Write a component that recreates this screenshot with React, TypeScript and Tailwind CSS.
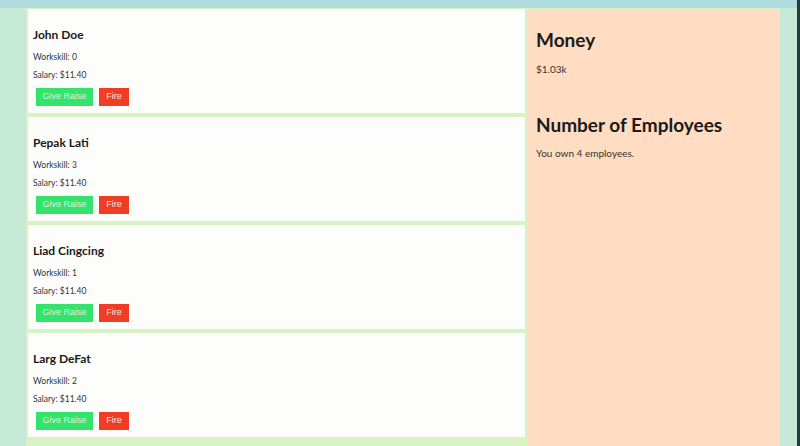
const employees = [
  { name: "John Doe", skill: 0 },
  { name: "Pepak Lati", skill: 3 },
  { name: "Liad Cingcing", skill: 1 },
  { name: "Larg DeFat", skill: 2 },
]

function EmployeeCard({ name, skill }: { name: string; skill: number }) {
  return (
    <div className="bg-[#fdfdfb] h-[104px] pl-[5px] pt-[18px] flex flex-col">
      <h3 className="text-[12px] leading-[16px] font-bold text-[#1a1a1a]">{name}</h3>
      <p className="text-[8.5px] leading-[11px] mt-[9px] text-[#333]">Workskill: {skill}</p>
      <p className="text-[8.5px] leading-[11px] mt-[7px] text-[#333]">Salary: $11.40</p>
      <div className="flex gap-[6px] mt-[7px] ml-[3px]">
        <button className="w-[57px] h-[18px] bg-[#34e36c] text-[#d8f5dc] text-[9px] font-['Liberation_Sans',sans-serif]">
          Give Raise
        </button>
        <button className="w-[30px] h-[18px] bg-[#f23d24] text-[#ffe4dc] text-[9px] font-['Liberation_Sans',sans-serif]">
          Fire
        </button>
      </div>
    </div>
  )
}

export default function App() {
  return (
    <div className="h-[446px] overflow-hidden bg-[#c6e8d6] font-['Lato','Noto_Sans',sans-serif] flex">
      <div className="flex-1">
        <div className="h-[8px] bg-[#b0dce0]" />
        <div className="ml-[26px] w-[754px] h-[440px] bg-[#d6f3c4] flex p-[1px] pl-[2px]">
          <div className="w-[497px] flex flex-col gap-[4px]">
            {employees.map((e) => (
              <EmployeeCard key={e.name} name={e.name} skill={e.skill} />
            ))}
          </div>
          <div className="flex-1 ml-[3px] bg-[#ffdcc2] pl-[8px] pt-[19px]">
            <h2 className="text-[19px] leading-[24px] font-bold text-[#1a1a1a]">Money</h2>
            <p className="text-[10px] leading-[12px] mt-[11px] text-[#333]">$1.03k</p>
            <h2 className="text-[19px] leading-[24px] font-bold text-[#1a1a1a] mt-[38px]">Number of Employees</h2>
            <p className="text-[10px] leading-[12px] mt-[10px] text-[#333]">You own 4 employees.</p>
          </div>
        </div>
      </div>
      <div className="w-[3px] bg-[#2a3a3a]" />
    </div>
  )
}
